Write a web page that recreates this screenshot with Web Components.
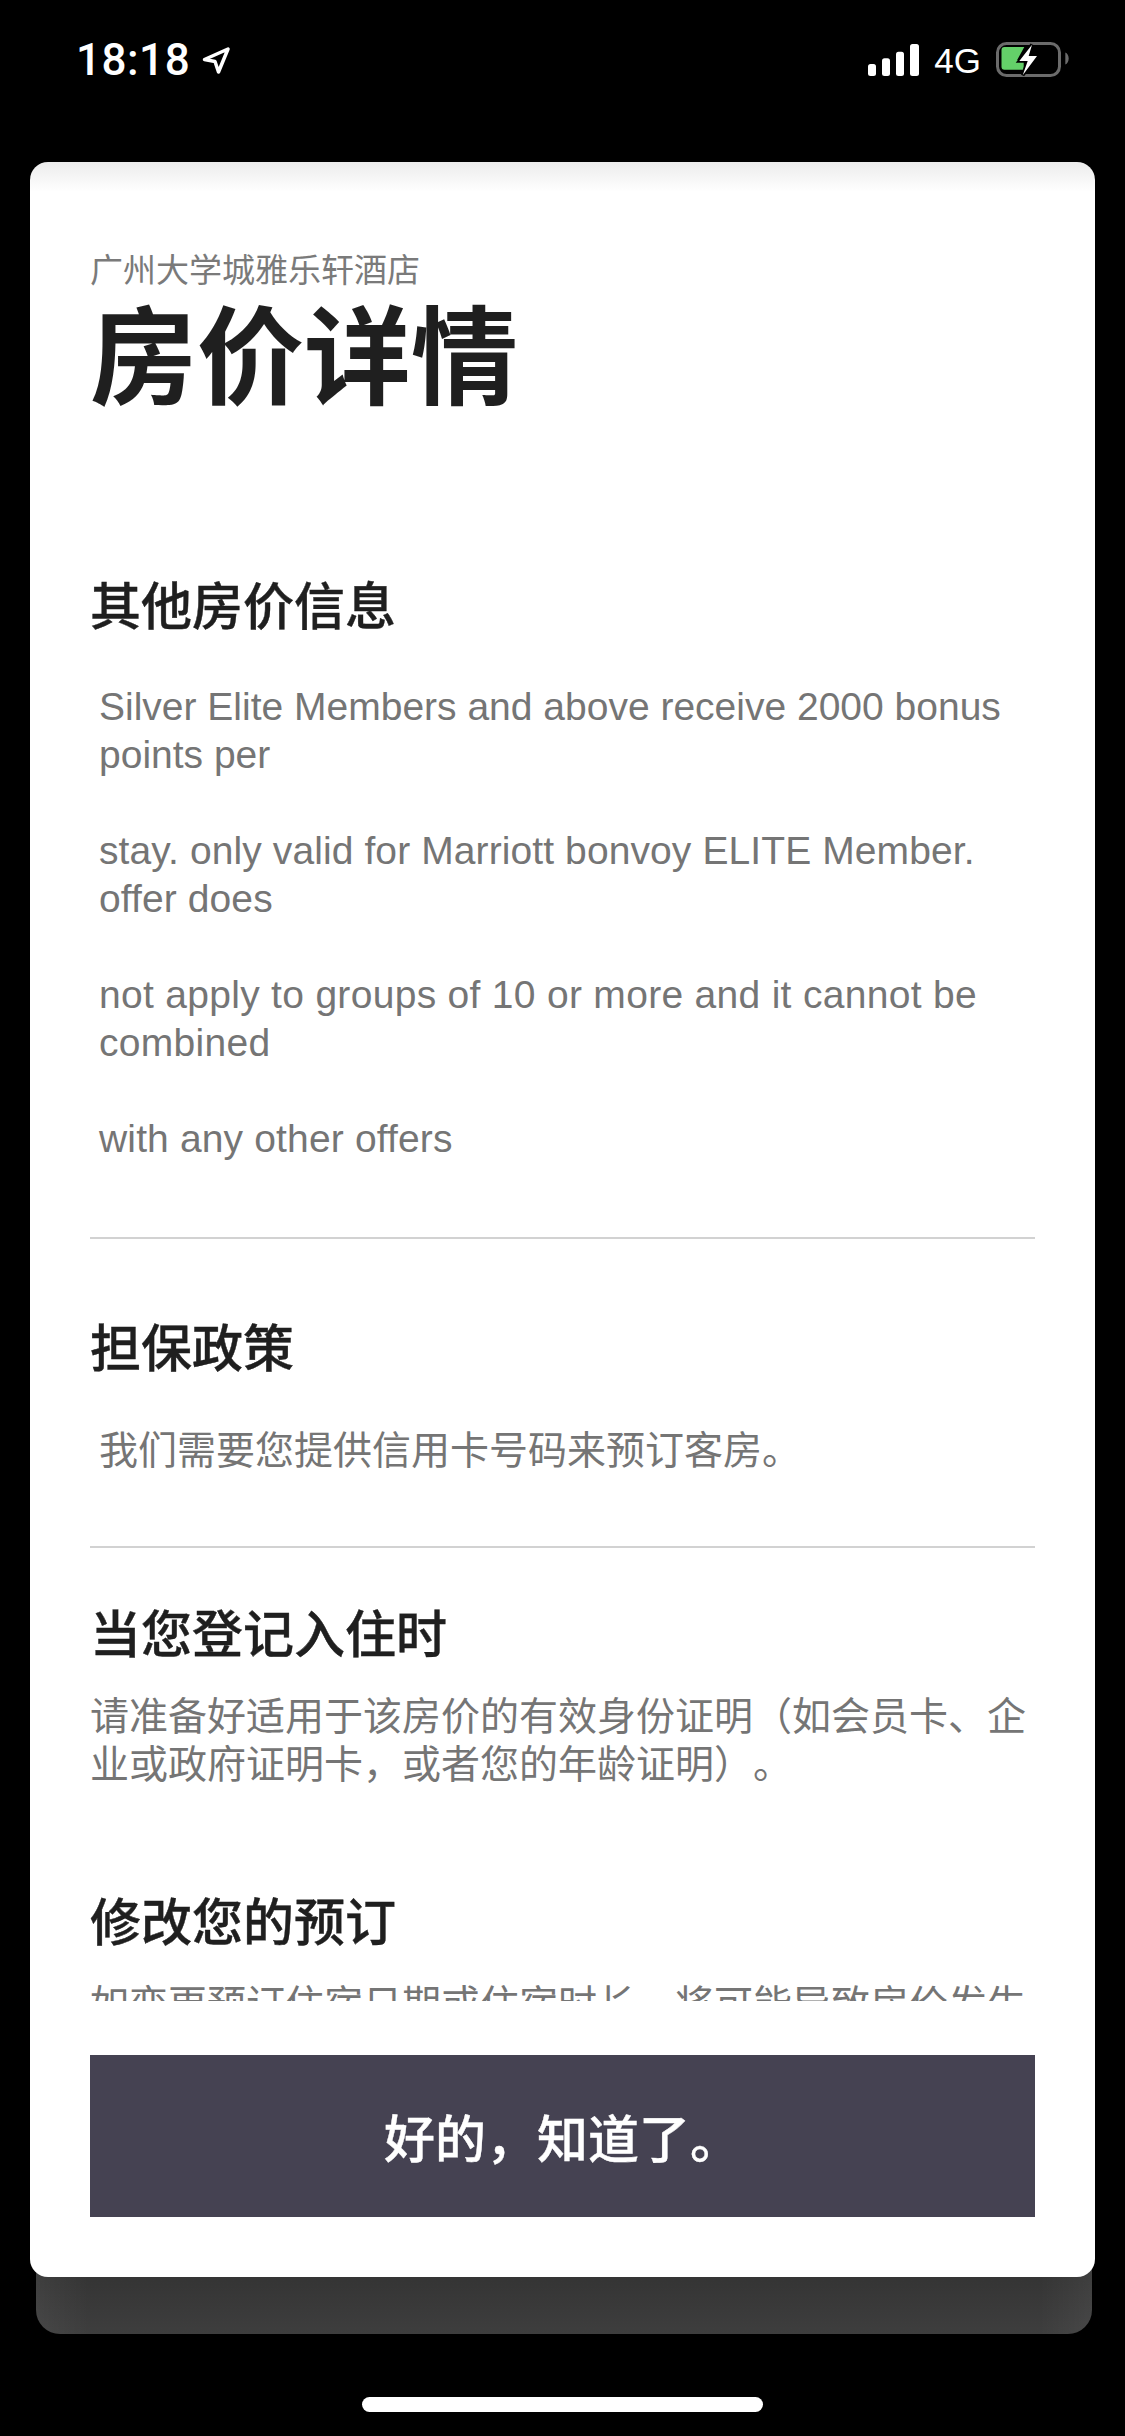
<!DOCTYPE html>
<html lang="zh-CN">
<head>
<meta charset="utf-8">
<title>房价详情</title>
<style>
  html, body { margin: 0; padding: 0; background: #000; }
  body { width: 1125px; height: 2436px; overflow: hidden; font-family: "Liberation Sans", "Noto Sans CJK SC", sans-serif; }
</style>
</head>
<body>
<rate-screen>
  <status-bar slot="status" time="18:18" network="4G"></status-bar>
  <span slot="hotel">广州大学城雅乐轩酒店</span>
  <span slot="title">房价详情</span>
  <rate-section heading="其他房价信息" indent divider>
    <p>Silver Elite Members and above receive 2000 bonus points per</p>
    <p style="letter-spacing: .1px">stay. only valid for Marriott bonvoy ELITE Member. offer does</p>
    <p style="letter-spacing: .3px">not apply to groups of 10 or more and it cannot be combined</p>
    <p style="letter-spacing: .15px">with any other offers</p>
  </rate-section>
  <rate-section heading="担保政策" indent divider style="margin-top: 24px; --body-top: 46px; --section-bottom: 23px">
    <p>我们需要您提供信用卡号码来预订客房。</p>
  </rate-section>
  <rate-section heading="当您登记入住时" style="margin-top: 1px">
    <p>请准备好适用于该房价的有效身份证明（如会员卡、企业或政府证明卡，或者您的年龄证明）。</p>
  </rate-section>
  <rate-section heading="修改您的预订">
    <p>如变更预订住宿日期或住宿时长，将可能导致房价发生变化。</p>
  </rate-section>
  <span slot="action">好的，知道了。</span>
</rate-screen>

<script>
class StatusBar extends HTMLElement {
  connectedCallback() {
    const root = this.attachShadow({mode: 'open'});
    root.innerHTML = `
      <style>
        :host { display: flex; align-items: center; justify-content: space-between; height: 120px; padding: 0 56px 0 76px; color: #fff; }
        .left, .right { display: flex; align-items: center; }
        .time { font: 500 44px/1 Roboto, "Liberation Sans", sans-serif; letter-spacing: .5px; }
        .net { font: 400 35px/1 "Liberation Sans", sans-serif; margin: 0 15px; }
        svg { display: block; }
      </style>
      <div class="left">
        <span class="time">${this.getAttribute('time')}</span>
        <svg width="29" height="29" viewBox="0 0 29 29" style="margin-left:12px">
          <path d="M2.500 13.500 26 3 16.500 26 13 15.500Z" fill="none" stroke="#fff" stroke-width="3.500" stroke-linejoin="round"/>
        </svg>
      </div>
      <div class="right">
        <svg width="51" height="32" viewBox="0 0 51 32">
          <rect x="0" y="20" width="8" height="12" rx="2.500" fill="#fff"/>
          <rect x="14" y="14.300" width="8" height="17.700" rx="2.500" fill="#fff"/>
          <rect x="28" y="7.700" width="8" height="24.300" rx="2.500" fill="#fff"/>
          <rect x="42" y="0" width="9" height="32" rx="2.500" fill="#fff"/>
        </svg>
        <span class="net">${this.getAttribute('network')}</span>
        <svg width="73" height="36" viewBox="0 0 73 36">
          <rect x="1.500" y="1.500" width="62" height="32" rx="9" fill="none" stroke="#6b6b6b" stroke-width="3"/>
          <path d="M69.300 10.500c2 .8 3.400 3 3.400 6s-1.400 5.200-3.400 6Z" fill="#6b6b6b"/>
          <path d="M8.500 5H28.300L21 18.300h6.700v9.400H8.500a3 3 0 0 1-3-3V8a3 3 0 0 1 3-3Z" fill="#64d069"/>
          <path d="M36 2.700 23.300 19h8.400l-5 14.300L41 14h-8.300Z" fill="#fff" stroke="#000" stroke-width="3.500" stroke-linejoin="miter"/>
          <path d="M36 2.700 23.300 19h8.400l-5 14.300L41 14h-8.300Z" fill="#fff"/>
        </svg>
      </div>`;
  }
}

class RateSection extends HTMLElement {
  connectedCallback() {
    const root = this.attachShadow({mode: 'open'});
    root.innerHTML = `
      <style>
        :host { display: block; color: #757575; }
        :host([divider]) { border-bottom: 2px solid #d2d2d2; padding-bottom: var(--section-bottom, 26px); }
        h2 { margin: 0; font: 500 51px/72px "Noto Sans CJK SC", sans-serif; color: #1f1f1f; -webkit-text-stroke: .4px #1f1f1f; }
        .body { padding-top: 26px; font: 39px/48px "Liberation Sans", "Noto Sans CJK SC", sans-serif; text-spacing-trim: space-all; }
        :host([indent]) .body { padding-top: var(--body-top, 44px); padding-left: 9px; }
        ::slotted(p) { margin: 0 0 48px; }
      </style>
      <h2>${this.getAttribute('heading')}</h2>
      <div class="body"><slot></slot></div>`;
  }
}

class RateScreen extends HTMLElement {
  constructor() {
    super();
    this.attachShadow({mode: 'open'}).innerHTML = `
      <style>
        :host { display: flex; flex-direction: column; width: 1125px; height: 2436px; background: #000; }
        .stack { position: relative; margin: 42px 30px 0; }
        .back { position: absolute; left: 6px; right: 3px; bottom: -57px; height: 120px; border-radius: 0 0 24px 24px;
          background: linear-gradient(90deg, rgba(255,255,255,.05), transparent 5%, transparent 95%, rgba(255,255,255,.05)), linear-gradient(#2a2a2a, #3e3e3e); }
        .card { position: relative; display: flex; flex-direction: column; height: 2115px; box-sizing: border-box; padding: 88px 60px 60px; background: linear-gradient(#ececec, #fff 30px); border-radius: 18px; }
        .hotel { font: 33px/36px "Noto Sans CJK SC", sans-serif; color: #7a7a7a; }
        h1 { margin: 9px 0 162px; font: 700 107px/110px "Noto Sans CJK SC", sans-serif; color: #1f1f1f; }
        .scroll { flex: 1; min-height: 0; overflow: hidden; display: flex; flex-direction: column; gap: 46px; }
        .scroll ::slotted(*) { flex: none; }
        .ok { flex: none; display: flex; align-items: center; justify-content: center; height: 162px; margin-top: 54px; background: #454252; color: #fff; font: 500 51px/1 "Noto Sans CJK SC", sans-serif; -webkit-text-stroke: .4px #fff; }
        .home { width: 401px; height: 15px; margin: 120px auto 0; border-radius: 8px; background: #fff; }
      </style>
      <slot name="status"></slot>
      <div class="stack">
        <div class="back"></div>
        <div class="card">
          <div class="hotel"><slot name="hotel"></slot></div>
          <h1><slot name="title"></slot></h1>
          <div class="scroll"><slot></slot></div>
          <div class="ok"><slot name="action"></slot></div>
        </div>
      </div>
      <div class="home"></div>`;
  }
}

customElements.define('status-bar', StatusBar);
customElements.define('rate-section', RateSection);
customElements.define('rate-screen', RateScreen);
</script>
</body>
</html>
